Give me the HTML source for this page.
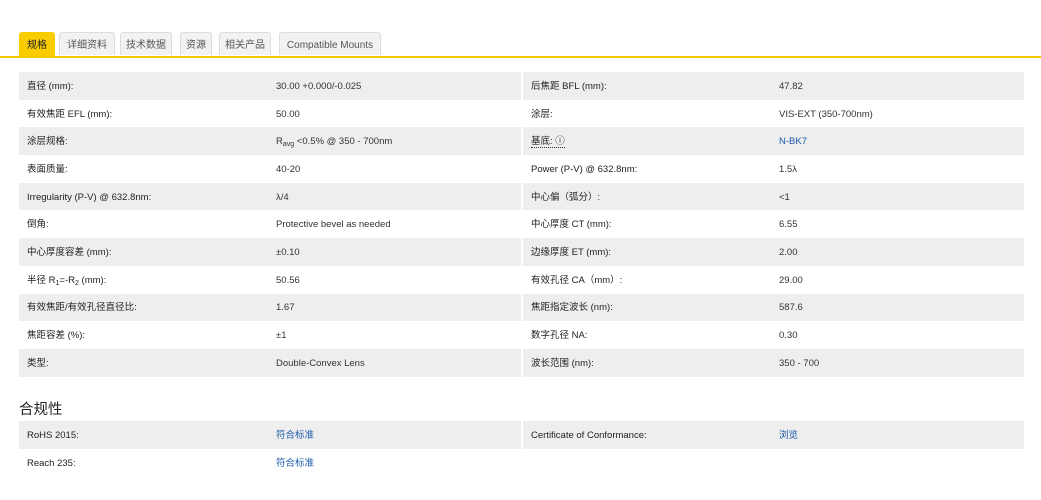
<!DOCTYPE html>
<html><head><meta charset="utf-8"><style>
body{margin:0;background:#fff;font-family:"Liberation Sans","Noto Sans CJK SC",sans-serif;color:#333;width:1041px;height:500px;overflow:hidden;position:relative}
.tabs{position:absolute;top:32px;left:0;width:1041px;height:24px;border-bottom:2px solid #f5c800}
.tab{position:absolute;top:0;height:23px;line-height:25px;font-size:10px;color:#555;background:#f2f2f2;border:1px solid #ddd;border-bottom:none;border-radius:3px 3px 0 0;text-align:center;box-sizing:border-box}
.tab.a{background:#f9cc00;border-color:#f9cc00;color:#222;height:24px}
table{position:absolute;left:19px;width:1005px;border-collapse:collapse;font-size:9.5px;table-layout:fixed}
td{height:27.7px;padding:2px 0 0 8px;box-sizing:border-box;vertical-align:middle;line-height:12px;white-space:nowrap}
tr:nth-child(odd) td{background:#eee}
td.l{width:249px;color:#222}td.v{width:254px;border-right:2px solid #fff}td.l2{width:249px;color:#222}
.lnk{color:#1a5aa8}
h3{position:absolute;left:19px;top:398px;margin:0;font-size:14.5px;font-weight:normal;color:#222}
sub{font-size:7px;line-height:0;vertical-align:-2px}
</style></head><body>
<div class="tabs">
<div class="tab a" style="left:19px;width:36px">规格</div>
<div class="tab" style="left:59px;width:56px">详细资料</div>
<div class="tab" style="left:120px;width:52px">技术数据</div>
<div class="tab" style="left:180px;width:32px">资源</div>
<div class="tab" style="left:219px;width:52px">相关产品</div>
<div class="tab" style="left:279px;width:102px">Compatible Mounts</div>
</div>
<table style="top:72px">
<tr><td class="l">直径 (mm):</td><td class="v">30.00 +0.000/-0.025</td><td class="l2">后焦距 BFL (mm):</td><td>47.82</td></tr>
<tr><td class="l">有效焦距 EFL (mm):</td><td class="v">50.00</td><td class="l2">涂层:</td><td>VIS-EXT (350-700nm)</td></tr>
<tr><td class="l">涂层规格:</td><td class="v">R<sub>avg</sub> &lt;0.5% @ 350 - 700nm</td><td class="l2"><span style="border-bottom:1px dotted #333">基底: ⓘ</span></td><td class="lnk">N-BK7</td></tr>
<tr><td class="l">表面质量:</td><td class="v">40-20</td><td class="l2">Power (P-V) @ 632.8nm:</td><td>1.5λ</td></tr>
<tr><td class="l">Irregularity (P-V) @ 632.8nm:</td><td class="v">λ/4</td><td class="l2">中心偏（弧分）:</td><td>&lt;1</td></tr>
<tr><td class="l">倒角:</td><td class="v">Protective bevel as needed</td><td class="l2">中心厚度 CT (mm):</td><td>6.55</td></tr>
<tr><td class="l">中心厚度容差 (mm):</td><td class="v">±0.10</td><td class="l2">边缘厚度 ET (mm):</td><td>2.00</td></tr>
<tr><td class="l">半径 R<sub>1</sub>=-R<sub>2</sub> (mm):</td><td class="v">50.56</td><td class="l2">有效孔径 CA（mm）:</td><td>29.00</td></tr>
<tr><td class="l">有效焦距/有效孔径直径比:</td><td class="v">1.67</td><td class="l2">焦距指定波长 (nm):</td><td>587.6</td></tr>
<tr><td class="l">焦距容差 (%):</td><td class="v">±1</td><td class="l2">数字孔径 NA:</td><td>0.30</td></tr>
<tr><td class="l">类型:</td><td class="v">Double-Convex Lens</td><td class="l2">波长范围 (nm):</td><td>350 - 700</td></tr>
</table>
<h3>合规性</h3>
<table style="top:421px">
<tr><td class="l">RoHS 2015:</td><td class="v lnk">符合标准</td><td class="l2">Certificate of Conformance:</td><td class="lnk">浏览</td></tr>
<tr><td class="l">Reach 235:</td><td class="v lnk" style="border-right:none">符合标准</td><td class="l2"></td><td></td></tr>
</table>
</body></html>
